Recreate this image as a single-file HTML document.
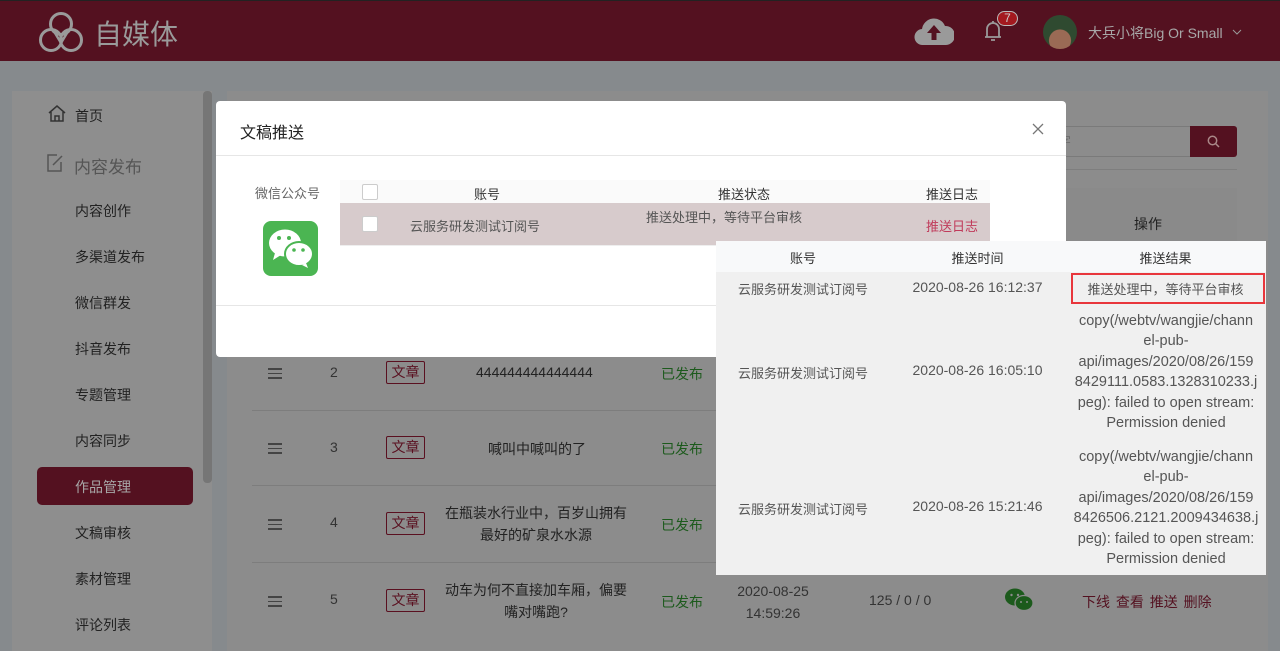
<!DOCTYPE html>
<html><head><meta charset="utf-8"><style>
*{box-sizing:border-box;margin:0;padding:0}
body{width:1280px;height:640px;overflow:hidden;background:#868a8d;font-family:"Liberation Sans","Noto Sans CJK SC",sans-serif;position:relative;color:#222}
.a{position:absolute}
.hdr{left:0;top:0;width:1280px;height:61px;background:#541120;border-top:1px solid #222}
.side{left:12px;top:91px;width:200px;height:560px;background:#8e8e8e}
.mi{position:absolute;left:75px;font-size:14px;color:#222}
.cont{left:227px;top:91px;width:1041px;height:560px;background:#8c8c8c}
.t14{font-size:14px}
.tag{position:absolute;left:386px;width:39px;height:23px;border:1px solid #5a1020;border-radius:2px;font-size:14px;color:#5a1020;text-align:center;line-height:21px}
.pub{position:absolute;left:661px;font-size:14px;color:#1c5a1c}
.line{position:absolute;left:252px;width:990px;height:1px;background:#7d7d7d}
.lst{position:absolute;left:268px;width:14px;height:11px}
.lst i{display:block;height:1.5px;background:#444;margin-bottom:3px}
.modal{left:216px;top:101px;width:850px;height:256px;background:#fff;border-radius:4px}
.cb{position:absolute;width:16px;height:16px;border:1px solid #ccc;background:#fff;border-radius:2px}
.pop{left:716px;top:241px;width:550px;height:334px;background:#f0f0f0;font-size:14px;color:#555}
.c{position:absolute;text-align:center;white-space:nowrap}
</style></head><body>
<div class="a hdr">
<svg class="a" style="left:38px;top:10px" width="46" height="42" viewBox="0 0 46 42" fill="none" stroke="#9a9a9a" stroke-width="3"><circle cx="23" cy="13" r="10.5"/><circle cx="13" cy="29" r="10.5"/><circle cx="33" cy="29" r="10.5"/><path d="M17 22 L23 32 L29 22" stroke-width="2.5"/></svg>
<div class="a" style="left:94px;top:12px;font-size:28px;color:#9a9a9a">自媒体</div>
<svg class="a" style="left:914px;top:15px" width="40" height="30" viewBox="0 0 40 30"><path d="M9 29 A8 8 0 0 1 8 13 A12 12 0 0 1 31 10 A9.5 9.5 0 0 1 32 29 Z" fill="#9a9a9a"/><path d="M20 9 L13 17 H17.5 V24 H22.5 V17 H27 Z" fill="#541120"/></svg>
<svg class="a" style="left:983px;top:18px" width="20" height="24" viewBox="0 0 20 24" fill="none" stroke="#9a9a9a" stroke-width="1.8"><path d="M4 18 V10 A6 6 0 0 1 16 10 V18 M2 18 H18 M10 2 V4 M8 21 H12"/></svg>
<div class="a" style="left:997px;top:10px;width:21px;height:15px;border-radius:8px;background:#a3191f;border:1px solid #bbb;color:#ccc;font-size:12px;text-align:center;line-height:13px">7</div>
<div class="a" style="left:1043px;top:14px;width:34px;height:34px;border-radius:50%;background:radial-gradient(circle at 50% 75%,#9a6a55 0 35%,#2f4a30 37%);"></div>
<div class="a" style="left:1088px;top:22px;font-size:14px;color:#a8a8a8">大兵小将Big Or Small</div>
<svg class="a" style="left:1232px;top:27px" width="10" height="8"><path d="M1 2 L5 6 L9 2" stroke="#999" fill="none"/></svg>
</div>

<div class="a side">
<div class="a" style="right:0;top:0;width:9px;height:392px;background:#767676;border-radius:4px"></div>
</div>
<svg class="a" style="left:48px;top:105px" width="18" height="17" viewBox="0 0 18 17" fill="none" stroke="#333" stroke-width="1.5"><path d="M1 8 L9 1 L17 8 M3 7 V16 H15 V7 M7 16 V11 H11 V16"/></svg>
<div class="mi" style="left:75px;top:106px;color:#222">首页</div>
<svg class="a" style="left:47px;top:154px" width="17" height="18" viewBox="0 0 17 18" fill="none" stroke="#555" stroke-width="1.5"><path d="M10 1 H1 V17 H14 V8 M6 11 L15 2"/></svg>
<div class="mi" style="left:74px;top:153px;font-size:17px;color:#555">内容发布</div>
<div class="mi" style="top:201px">内容创作</div>
<div class="mi" style="top:247px">多渠道发布</div>
<div class="mi" style="top:293px">微信群发</div>
<div class="mi" style="top:339px">抖音发布</div>
<div class="mi" style="top:385px">专题管理</div>
<div class="mi" style="top:431px">内容同步</div>
<div class="a" style="left:37px;top:467px;width:156px;height:38px;background:#541120;border-radius:5px"></div>
<div class="mi" style="top:477px;color:#a8a8a8">作品管理</div>
<div class="mi" style="top:523px">文稿审核</div>
<div class="mi" style="top:569px">素材管理</div>
<div class="mi" style="top:615px">评论列表</div>

<div class="a cont"></div>
<div class="a" style="left:1040px;top:126px;width:152px;height:31px;border:1px solid #7a7a7a;border-right:none;font-size:13px;color:#6e6e6e;line-height:29px;padding-left:4px">名字</div>
<div class="a" style="left:1190px;top:126px;width:47px;height:31px;background:#541120;border-radius:0 3px 3px 0"></div>
<svg class="a" style="left:1207px;top:135px" width="13" height="13" fill="none" stroke="#a88" stroke-width="1.5"><circle cx="5.5" cy="5.5" r="4.2"/><path d="M8.5 8.5 L12 12"/></svg>
<div class="a" style="left:1040px;top:169px;width:197px;height:1px;background:#7e7e7e"></div>
<div class="a" style="left:252px;top:188px;width:985px;height:70px;background:#8a8a8a"></div>
<div class="a t14" style="left:1134px;top:214px">操作</div>

<div class="line" style="top:410px"></div><div class="line" style="top:485px"></div><div class="line" style="top:562px"></div>
<div class="lst" style="top:368px"><i></i><i></i><i></i></div><div class="a t14" style="left:330px;top:364px;color:#333">2</div><div class="tag" style="top:361px">文章</div><div class="a t14" style="left:476px;top:364px">444444444444444</div><div class="pub" style="top:364px">已发布</div>
<div class="lst" style="top:443px"><i></i><i></i><i></i></div><div class="a t14" style="left:330px;top:439px;color:#333">3</div><div class="tag" style="top:436px">文章</div><div class="a t14" style="left:487px;top:439px;width:100px;text-align:center">喊叫中喊叫的了</div><div class="pub" style="top:439px">已发布</div>
<div class="lst" style="top:519px"></div><div class="a t14" style="left:330px;top:514px;color:#333">4</div><div class="tag" style="top:512px">文章</div><div class="c t14" style="left:436px;top:502px;width:200px;line-height:22px">在瓶装水行业中，百岁山拥有<br>最好的矿泉水水源</div><div class="pub" style="top:515px">已发布</div>
<div class="lst" style="top:596px"><i></i><i></i><i></i></div><div class="a t14" style="left:330px;top:591px;color:#333">5</div><div class="tag" style="top:589px">文章</div><div class="c t14" style="left:436px;top:579px;width:200px;line-height:22px">动车为何不直接加车厢，偏要<br>嘴对嘴跑?</div><div class="pub" style="top:592px">已发布</div>
<div class="a t14" style="left:728px;top:580px;width:90px;text-align:center;line-height:22px;color:#333">2020-08-25 14:59:26</div>
<div class="a t14" style="left:869px;top:592px;color:#333">125 / 0 / 0</div>
<svg class="a" style="left:1004px;top:587px" width="32" height="26" viewBox="0 0 32 26"><ellipse cx="11" cy="10" rx="10" ry="8.5" fill="#1c5a1c"/><ellipse cx="20" cy="16" rx="9" ry="7.5" fill="#1c5a1c" stroke="#8c8c8c" stroke-width="1.2"/><circle cx="7.5" cy="8" r="1.2" fill="#8c8c8c"/><circle cx="14" cy="8" r="1.2" fill="#8c8c8c"/><circle cx="17" cy="15" r="1" fill="#8c8c8c"/><circle cx="23" cy="15" r="1" fill="#8c8c8c"/></svg>
<div class="a t14" style="left:1082px;top:592px;color:#541120;word-spacing:2px">下线 查看 推送 删除</div>
<div class="lst" style="top:519px"><i></i><i></i><i></i></div>

<div class="a modal">
<div class="a" style="left:24px;top:18px;font-size:16px;color:#222">文稿推送</div>
<svg class="a" style="left:816px;top:22px" width="12" height="12" stroke="#777" stroke-width="1.3"><path d="M1 1 L11 11 M11 1 L1 11"/></svg>
<div class="a" style="left:0;top:54px;width:850px;height:1px;background:#e6e6e6"></div>
<div class="a" style="left:39px;top:82px;font-size:13px;color:#666">微信公众号</div>
<svg class="a" style="left:47px;top:120px" width="55" height="55" viewBox="0 0 55 55"><rect width="55" height="55" rx="8" fill="#4bb552"/><ellipse cx="22" cy="22" rx="16" ry="13.5" fill="#fff"/><path d="M12 32 L10 39 L18 34Z" fill="#fff"/><ellipse cx="36" cy="33" rx="14" ry="12" fill="#fff" stroke="#4bb552" stroke-width="2"/><path d="M43 42 L45 47 L39 44Z" fill="#fff"/><circle cx="16" cy="17" r="2" fill="#4bb552"/><circle cx="26" cy="17" r="2" fill="#4bb552"/><circle cx="31" cy="29" r="1.8" fill="#4bb552"/><circle cx="40" cy="29" r="1.8" fill="#4bb552"/></svg>
<div class="a" style="left:124px;top:79px;width:650px;height:23px;background:#fafafa"></div>
<div class="a" style="left:124px;top:102px;width:650px;height:42px;background:#d7cbcc"></div>
<div class="a" style="left:124px;top:144px;width:650px;height:1px;background:#eee"></div>
<div class="cb" style="left:146px;top:83px"></div><div class="cb" style="left:146px;top:115px"></div>
<div class="a" style="left:258px;top:83px;font-size:13px;color:#333">账号</div>
<div class="a" style="left:502px;top:83px;font-size:13px;color:#333">推送状态</div>
<div class="a" style="left:710px;top:83px;font-size:13px;color:#333">推送日志</div>
<div class="a" style="left:194px;top:115px;font-size:13px;color:#555">云服务研发测试订阅号</div>
<div class="a" style="left:430px;top:106px;font-size:13px;color:#555">推送处理中，等待平台审核</div>
<div class="a" style="left:710px;top:115px;font-size:13px;color:#c03a5a">推送日志</div>
<div class="a" style="left:0;top:204px;width:850px;height:1px;background:#e6e6e6"></div>
</div>

<div class="a pop">
<div class="a" style="left:0;top:0;width:550px;height:31px;background:#f8f9fa"></div>
<div class="c" style="left:0;width:174px;top:7px;color:#333;font-size:13px">账号</div>
<div class="c" style="left:174px;width:175px;top:7px;color:#333;font-size:13px">推送时间</div>
<div class="c" style="left:349px;width:201px;top:7px;color:#333;font-size:13px">推送结果</div>
<div class="c" style="left:0;width:174px;top:38px;font-size:13px">云服务研发测试订阅号</div>
<div class="c" style="left:174px;width:175px;top:38px">2020-08-26 16:12:37</div>
<div class="a" style="left:355px;top:32px;width:194px;height:31px;border:2px solid #e8363c"></div>
<div class="c" style="left:349px;width:201px;top:38px;font-size:13px">推送处理中，等待平台审核</div>
<div class="c" style="left:0;width:174px;top:122px;font-size:13px">云服务研发测试订阅号</div>
<div class="c" style="left:174px;width:175px;top:121px">2020-08-26 16:05:10</div>
<div class="c" style="left:350px;width:200px;top:70px;line-height:20.4px;font-size:14.5px">copy(/webtv/wangjie/chann<br>el-pub-<br>api/images/2020/08/26/159<br>8429111.0583.1328310233.j<br>peg): failed to open stream:<br>Permission denied</div>
<div class="c" style="left:0;width:174px;top:258px;font-size:13px">云服务研发测试订阅号</div>
<div class="c" style="left:174px;width:175px;top:257px">2020-08-26 15:21:46</div>
<div class="c" style="left:350px;width:200px;top:206px;line-height:20.4px;font-size:14.5px">copy(/webtv/wangjie/chann<br>el-pub-<br>api/images/2020/08/26/159<br>8426506.2121.2009434638.j<br>peg): failed to open stream:<br>Permission denied</div>
</div>
</body></html>
